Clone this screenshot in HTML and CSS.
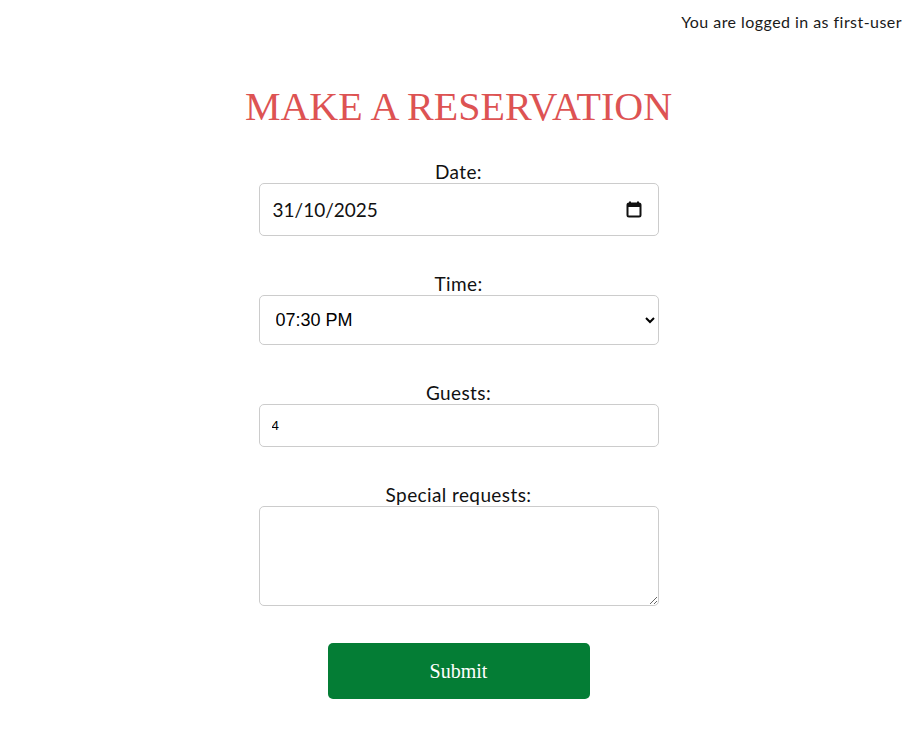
FILE: index.html
```html
<!DOCTYPE html>
<html lang="en">
<head>
<meta charset="utf-8">
<title>Make a reservation</title>
<link rel="stylesheet" href="styles.css">
</head>
<body>
<header class="topbar">
  <span class="login-status">You are logged in as first-user</span>
</header>
<main class="page">
  <h1 class="title">MAKE A RESERVATION</h1>
  <form class="form">
    <div class="field">
      <label class="label" for="date">Date:</label>
      <div class="control date-control">
        <input id="date" class="date-input" type="text" value="31/10/2025">
        <svg class="cal-icon" width="16" height="17" viewBox="0 0 16 17" aria-hidden="true">
          <rect x="3" y="0.5" width="2" height="3" fill="#111"/>
          <rect x="11" y="0.5" width="2" height="3" fill="#111"/>
          <rect x="1.5" y="2.5" width="13" height="13" rx="1.5" fill="none" stroke="#111" stroke-width="2"/>
          <rect x="1.5" y="2.5" width="13" height="3.5" fill="#111"/>
        </svg>
      </div>
    </div>
    <div class="field">
      <label class="label" for="time">Time:</label>
      <select id="time" class="control select">
        <option>07:30 PM</option>
      </select>
    </div>
    <div class="field">
      <label class="label" for="guests">Guests:</label>
      <input id="guests" class="control guests" type="number" value="4">
    </div>
    <div class="field">
      <label class="label" for="req">Special requests:</label>
      <textarea id="req" class="control textarea"></textarea>
    </div>
    <button type="button" class="submit">Submit</button>
  </form>
</main>
</body>
</html>
```

FILE: styles.css
```css
* { box-sizing: border-box; }
html, body { margin: 0; padding: 0; background: #fff; }
body {
  font-family: "Lato", "Noto Sans", sans-serif;
  color: #111;
}
.topbar {
  display: flex;
  justify-content: flex-end;
  padding: 12px 13px 0 0;
  height: 32px;
}
.login-status {
  font-size: 16px;
  line-height: 20px;
  letter-spacing: 0.45px;
  color: #1a1a1a;
}
.page {
  display: flex;
  flex-direction: column;
  align-items: center;
  padding-left: 2px;
}
.title {
  margin: 51px 0 0;
  font-family: "Liberation Serif", serif;
  font-weight: 400;
  font-size: 40px;
  line-height: 48px;
  letter-spacing: 0;
  color: #dd5353;
}
.form {
  margin-top: 30px;
  width: 400px;
  display: flex;
  flex-direction: column;
  align-items: center;
  gap: 37px;
}
.field {
  width: 100%;
  display: flex;
  flex-direction: column;
  align-items: center;
}
.label {
  font-size: 19px;
  line-height: 22px;
  letter-spacing: 0.4px;
  color: #111;
}
.control {
  width: 100%;
  border: 1px solid #ccc;
  border-radius: 5px;
  background: #fff;
}
.date-control {
  height: 53px;
  display: flex;
  align-items: center;
  padding: 0 16px 0 13px;
}
.date-input {
  flex: 1;
  border: none;
  outline: none;
  padding: 0;
  font-family: "Lato", "Noto Sans", sans-serif;
  font-size: 19px;
  color: #111;
  background: transparent;
}
.cal-icon { display: block; }
.select {
  height: 50px;
  padding: 0 4px 0 12px;
  font-family: "Liberation Sans", Arial, sans-serif;
  font-size: 18px;
  color: #000;
}
.guests {
  height: 43px;
  padding: 0 12px;
  font-family: "Liberation Sans", Arial, sans-serif;
  font-size: 13.33px;
  color: #000;
}
.textarea {
  height: 100px;
  resize: vertical;
  display: block;
}
.submit {
  width: 262px;
  height: 56px;
  border: none;
  border-radius: 5px;
  background: #047d35;
  color: #fff;
  font-family: "Liberation Serif", serif;
  font-size: 20px;
  cursor: pointer;
}
```
